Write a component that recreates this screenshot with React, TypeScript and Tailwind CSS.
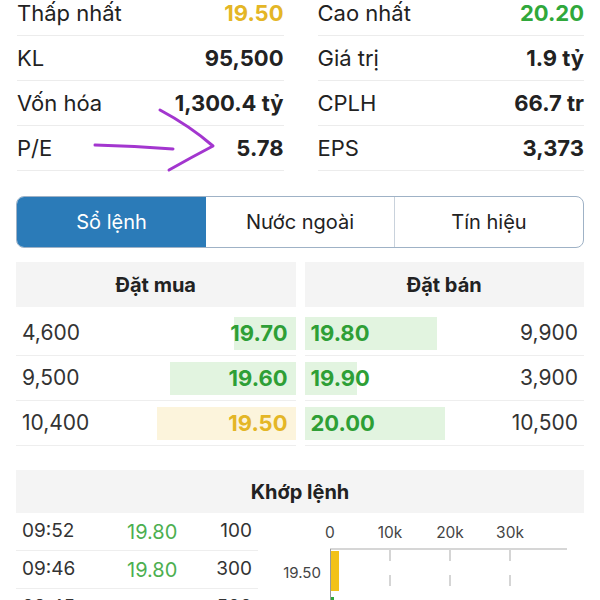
import React from 'react';

const stats: [string, string, string, string, string, string][] = [
  ['Thấp nhất', '19.50', 'text-[#e4b626]', 'Cao nhất', '20.20', 'text-[#30a83b]'],
  ['KL', '95,500', 'text-[#222]', 'Giá trị', '1.9 tỷ', 'text-[#222]'],
  ['Vốn hóa', '1,300.4 tỷ', 'text-[#222]', 'CPLH', '66.7 tr', 'text-[#222]'],
  ['P/E', '5.78', 'text-[#222]', 'EPS', '3,373', 'text-[#222]'],
];

const buys = [
  { qty: '4,600', price: '19.70', w: 62, yellow: false },
  { qty: '9,500', price: '19.60', w: 126, yellow: false },
  { qty: '10,400', price: '19.50', w: 139, yellow: true },
];

const sells = [
  { qty: '9,900', price: '19.80', w: 132 },
  { qty: '3,900', price: '19.90', w: 52 },
  { qty: '10,500', price: '20.00', w: 140 },
];

const trades = [
  ['09:52', '19.80', '100'],
  ['09:46', '19.80', '300'],
  ['09:45', '19.80', '500'],
];

function StatRow({ label, value, color }: { label: string; value: string; color: string }) {
  return (
    <div className="flex h-[45px] items-center justify-between border-b border-[#ececec] text-[22px]">
      <span className="text-[#222]">{label}</span>
      <span className={`font-bold ${color}`}>{value}</span>
    </div>
  );
}

function Chart() {
  return (
    <svg width="321" height="88" viewBox="262 512 321 88" className="block">
      <g fontSize="15.5" fill="#444" fontFamily="Inter, sans-serif" textAnchor="middle">
        <text x="330" y="537">0</text>
        <text x="390" y="537">10k</text>
        <text x="450" y="537">20k</text>
        <text x="510" y="537">30k</text>
        <text x="302" y="577" fontSize="15">19.50</text>
      </g>
      <line x1="330" y1="548" x2="567" y2="548" stroke="#c8c8c8" strokeWidth="1.5" />
      {[390, 450, 510].map((x) => (
        <line key={x} x1={x} y1="549" x2={x} y2="600" stroke="#c8c8c8" strokeWidth="1.5" strokeDasharray="11 14" />
      ))}
      <line x1="330.5" y1="548" x2="330.5" y2="600" stroke="#999" strokeWidth="1" />
      <rect x="331" y="550" width="8" height="40" fill="#f2c218" />
      <rect x="331" y="596" width="3" height="6" fill="#2fa63a" />
    </svg>
  );
}

export default function App() {
  return (
    <div
      className="relative h-[600px] w-[600px] overflow-hidden bg-white px-4"
      style={{ fontFamily: 'Inter, "Noto Sans", sans-serif' }}
    >
      {/* Thống kê */}
      <div className="mt-[-9px] grid grid-cols-2 gap-x-[34px] pl-px">
        <div>
          {stats.map((s) => (
            <StatRow key={s[0]} label={s[0]} value={s[1]} color={s[2]} />
          ))}
        </div>
        <div>
          {stats.map((s) => (
            <StatRow key={s[3]} label={s[3]} value={s[4]} color={s[5]} />
          ))}
        </div>
      </div>

      {/* Tabs */}
      <div className="mt-[25px] flex h-[52px] overflow-hidden rounded-lg border border-[#9fb2c6] text-[20px]">
        <div className="flex w-[189px] items-center justify-center bg-[#2b7bb8] text-white">Sổ lệnh</div>
        <div className="flex flex-1 items-center justify-center border-r border-[#c9d2dc] text-[#222]">Nước ngoài</div>
        <div className="flex flex-1 items-center justify-center text-[#222]">Tín hiệu</div>
      </div>

      {/* Sổ lệnh */}
      <div className="mt-[14px] grid grid-cols-2 gap-x-[9px]">
        <div>
          <div className="flex h-[45px] items-center justify-center bg-[#f4f4f4] text-[20px] font-bold text-[#222]">Đặt mua</div>
          <div className="mt-1">
            {buys.map((b) => (
              <div key={b.price} className="flex h-[45px] items-center justify-between border-b border-[#eeeeee]">
                <span className="pl-1.5 text-[21px] text-[#333]">{b.qty}</span>
                <div
                  className={`flex h-[33px] items-center justify-end pr-2 text-[22px] font-bold ${b.yellow ? 'bg-[#fcf4dc] text-[#e4b626]' : 'bg-[#e2f4e0] text-[#2e9f36]'}`}
                  style={{ width: b.w }}
                >
                  {b.price}
                </div>
              </div>
            ))}
          </div>
        </div>
        <div>
          <div className="flex h-[45px] items-center justify-center bg-[#f4f4f4] text-[20px] font-bold text-[#222]">Đặt bán</div>
          <div className="mt-1">
            {sells.map((s) => (
              <div key={s.price} className="flex h-[45px] items-center justify-between border-b border-[#eeeeee]">
                <div
                  className="flex h-[33px] items-center whitespace-nowrap bg-[#e2f4e0] pl-1.5 text-[22px] font-bold text-[#2e9f36]"
                  style={{ width: s.w }}
                >
                  {s.price}
                </div>
                <span className="pr-1.5 text-[21px] text-[#333]">{s.qty}</span>
              </div>
            ))}
          </div>
        </div>
      </div>

      {/* Khớp lệnh */}
      <div className="mt-[24px] flex h-[43px] items-center justify-center bg-[#f4f4f4] text-[20px] font-bold text-[#222]">
        Khớp lệnh
      </div>
      <div className="flex">
        <div className="w-[242px]">
          {trades.map((t) => (
            <div key={t[0]} className="flex h-[38px] items-center border-b border-[#eeeeee] text-[19px]">
              <span className="w-[111px] pl-1.5 text-[#333]">{t[0]}</span>
              <span className="w-[70px] text-[20px] text-[#4caf50]">{t[1]}</span>
              <span className="flex-1 pr-1.5 text-right text-[#333]">{t[2]}</span>
            </div>
          ))}
        </div>
        <div className="ml-1">
          <Chart />
        </div>
      </div>

      {/* Mũi tên chú thích */}
      <svg className="pointer-events-none absolute left-0 top-0" width="600" height="600">
        <path d="M95 145 Q135 146 173 149" fill="none" stroke="#a336cf" strokeWidth="3" strokeLinecap="round" />
        <path d="M160 110 Q190 126 213 146 Q192 157 169 170" fill="none" stroke="#a336cf" strokeWidth="3" strokeLinecap="round" strokeLinejoin="round" />
      </svg>
    </div>
  );
}
